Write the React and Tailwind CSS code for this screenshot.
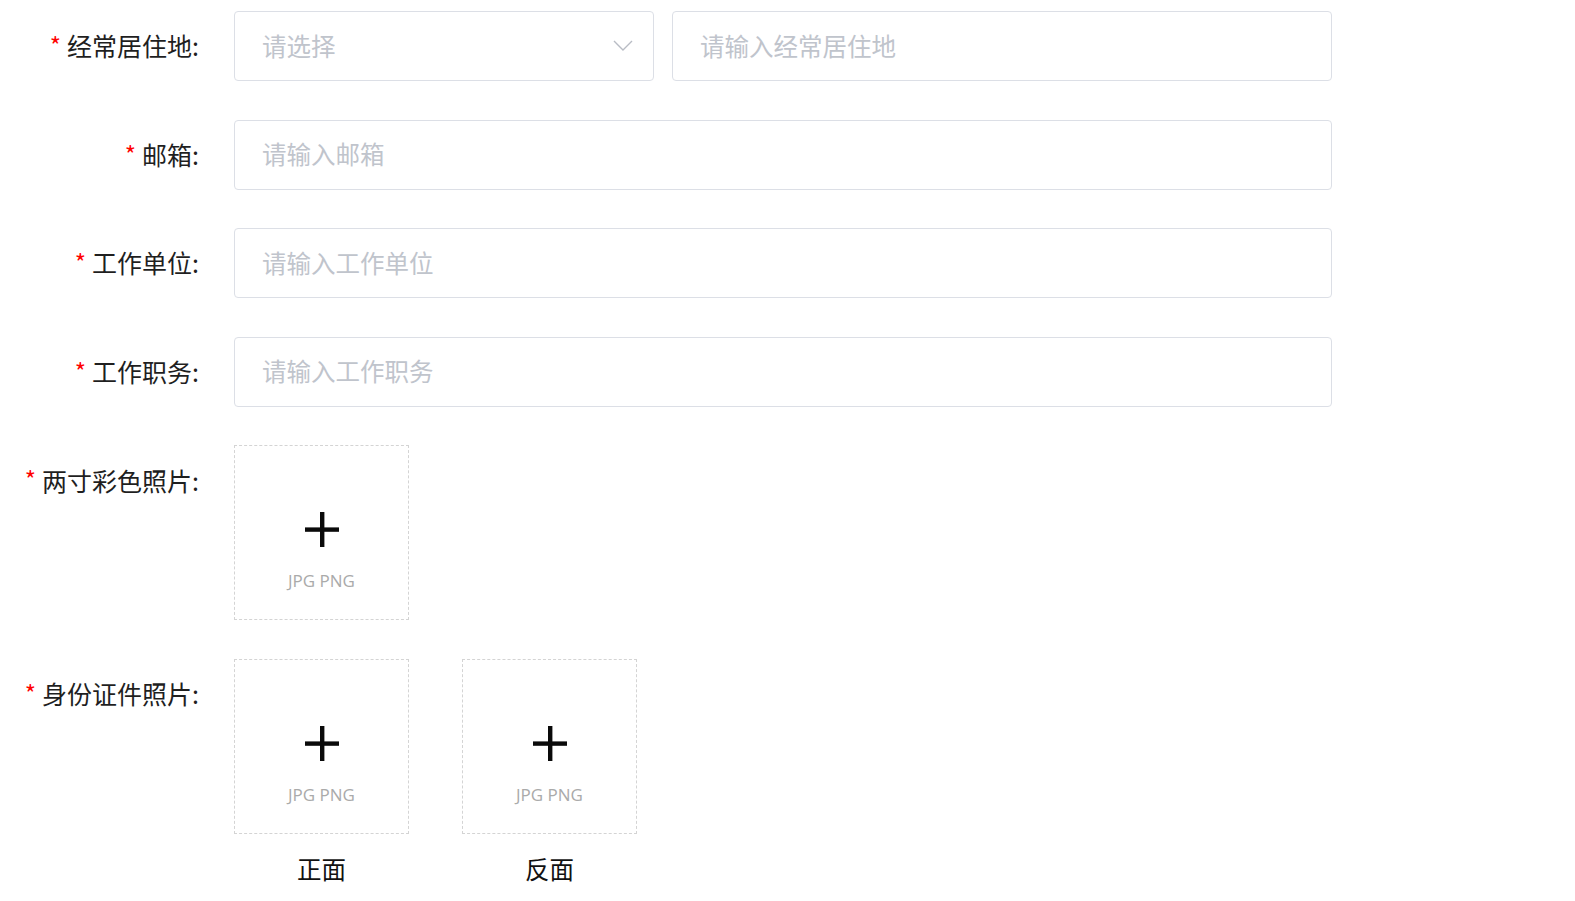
import React from "react";

const font = { fontFamily: '"Noto Sans CJK SC", "Noto Sans", sans-serif' };

function Label({ children }) {
  return (
    <div className="w-[199px] shrink-0 h-[70px] flex items-center justify-end text-[25px] text-[#1f1f1f]">
      <span className="text-[#ff0000] text-[24px] mr-[6px] relative top-[-1px]">*</span>
      <span>{children}:</span>
    </div>
  );
}

function Input({ placeholder, className = "" }) {
  return (
    <div className={`h-[70px] border border-[#dcdfe6] rounded-[4px] flex items-center pl-[27px] text-[24.5px] text-[#c0c4cc] ${className}`}>
      {placeholder}
    </div>
  );
}

function Upload() {
  return (
    <div className="w-[175px] h-[175px] border border-dashed border-[#d4d4d4] flex flex-col items-center pt-[66px]">
      <svg width="34" height="35" viewBox="0 0 34 35">
        <rect x="15" y="0" width="4.4" height="35" fill="#0a0a0a" />
        <rect x="0" y="15.4" width="34" height="4.4" fill="#0a0a0a" />
      </svg>
      <div className="mt-[22px] text-[17px] leading-[24px] text-[#aaaaaa]" style={{ fontFamily: '"Open Sans", "Noto Sans", sans-serif' }}>
        JPG PNG
      </div>
    </div>
  );
}

export default function App() {
  return (
    <div className="bg-white w-[1575px] h-[901px] pt-[11px]" style={font}>
      <div className="flex flex-col gap-[38.6px]">
        <div className="flex">
          <Label>经常居住地</Label>
          <div className="flex gap-[18px] ml-[35px] w-[1098px]">
            <div className="w-[420px] h-[70px] border border-[#dcdfe6] rounded-[4px] flex items-center justify-between pl-[27px] pr-[20px] text-[24.5px] text-[#c0c4cc]">
              <span>请选择</span>
              <svg width="20" height="12" viewBox="0 0 20 12" fill="none">
                <path d="M1 1 L10 10 L19 1" stroke="#b8bcc4" strokeWidth="1.4" />
              </svg>
            </div>
            <Input placeholder="请输入经常居住地" className="flex-1" />
          </div>
        </div>
        <div className="flex">
          <Label>邮箱</Label>
          <Input placeholder="请输入邮箱" className="ml-[35px] w-[1098px]" />
        </div>
        <div className="flex">
          <Label>工作单位</Label>
          <Input placeholder="请输入工作单位" className="ml-[35px] w-[1098px]" />
        </div>
        <div className="flex">
          <Label>工作职务</Label>
          <Input placeholder="请输入工作职务" className="ml-[35px] w-[1098px]" />
        </div>
        <div className="flex">
          <Label>两寸彩色照片</Label>
          <div className="ml-[35px]">
            <Upload />
          </div>
        </div>
        <div className="flex">
          <Label>身份证件照片</Label>
          <div className="ml-[35px] flex gap-[53px]">
            <div className="flex flex-col items-center">
              <Upload />
              <div className="mt-[17px] text-[24.5px] text-[#111]">正面</div>
            </div>
            <div className="flex flex-col items-center">
              <Upload />
              <div className="mt-[17px] text-[24.5px] text-[#111]">反面</div>
            </div>
          </div>
        </div>
      </div>
    </div>
  );
}
